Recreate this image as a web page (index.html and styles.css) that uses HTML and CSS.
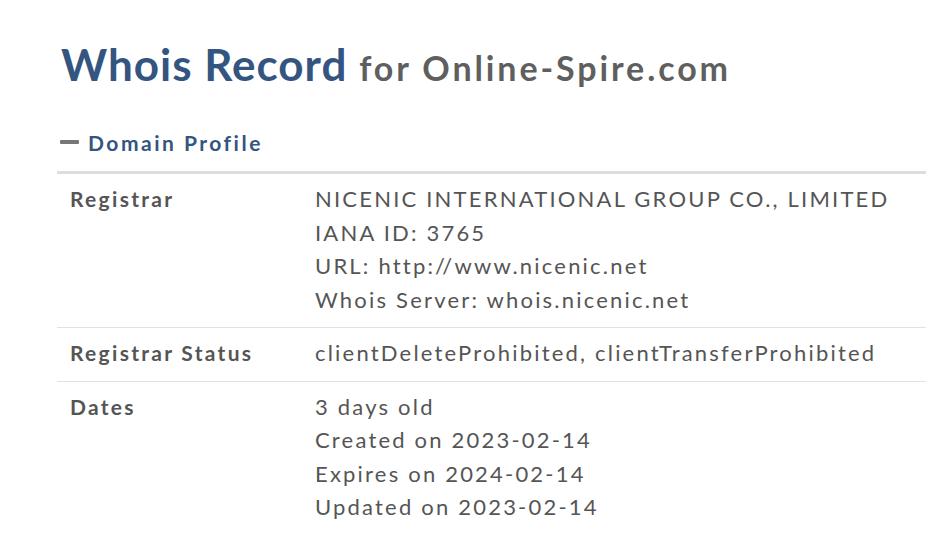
FILE: index.html
```html
<!DOCTYPE html>
<html>
<head>
<meta charset="utf-8">
<link rel="stylesheet" href="styles.css">
</head>
<body>
<div class="page">
  <h1 class="title"><span class="title-main">Whois Record</span> <span class="title-sub">for Online-Spire.com</span></h1>
  <div class="section-head"><span class="minus"></span><span class="section-name">Domain Profile</span></div>
  <div class="table">
    <div class="row">
      <div class="label">Registrar</div>
      <div class="value">
        <div>NICENIC INTERNATIONAL GROUP CO., LIMITED</div>
        <div>IANA ID: 3765</div>
        <div>URL: http://www.nicenic.net</div>
        <div>Whois Server: whois.nicenic.net</div>
      </div>
    </div>
    <div class="row">
      <div class="label">Registrar Status</div>
      <div class="value">
        <div>clientDeleteProhibited, clientTransferProhibited</div>
      </div>
    </div>
    <div class="row">
      <div class="label">Dates</div>
      <div class="value">
        <div>3 days old</div>
        <div>Created on 2023-02-14</div>
        <div>Expires on 2024-02-14</div>
        <div>Updated on 2023-02-14</div>
      </div>
    </div>
  </div>
</div>
</body>
</html>
```
FILE: styles.css
```css
html, body {
  margin: 0;
  padding: 0;
  background: #fff;
}
body {
  font-family: Lato, "Open Sans", sans-serif;
  color: #555;
}
.page {
  padding: 36px 0 0 57px;
}
.title {
  margin: 0;
  font-weight: 700;
  line-height: 56px;
  white-space: nowrap;
  padding-left: 4px;
}
.title-main {
  font-size: 44px;
  color: #34557f;
  letter-spacing: 1px;
}
.title-sub {
  font-size: 34px;
  color: #5f5f5f;
  letter-spacing: 2.9px;
  margin-left: 4px;
}
.section-head {
  display: flex;
  align-items: center;
  margin-top: 31px;
  height: 28px;
  padding-left: 3px;
}
.minus {
  width: 19px;
  height: 4px;
  border-radius: 1px;
  background: #777;
  margin-right: 9px;
}
.section-name {
  font-size: 21px;
  font-weight: 700;
  color: #34557f;
  letter-spacing: 2.5px;
}
.table {
  margin-top: 15px;
  border-top: 3px solid #ddd;
}
.row {
  display: grid;
  grid-template-columns: 245px 1fr;
  padding: 8px 0 11px 13px;
  border-bottom: 1px solid #e2e2e2;
}
.row:last-child {
  border-bottom: none;
}
.label {
  font-size: 21px;
  font-weight: 700;
  line-height: 33.5px;
  letter-spacing: 2.3px;
  color: #555;
}
.value {
  font-size: 22px;
  line-height: 33.5px;
  letter-spacing: 2.2px;
  color: #555;
  white-space: nowrap;
}
```
